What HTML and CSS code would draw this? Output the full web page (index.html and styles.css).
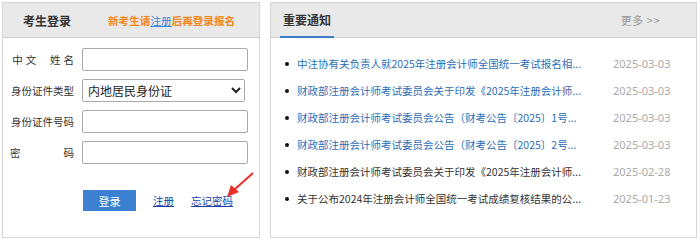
FILE: index.html
```html
<!DOCTYPE html>
<html>
<head>
    <meta charset="utf-8">
    <link rel="stylesheet" href="styles.css">
</head>
<body>
<div class="page">
    <div class="login-box">
        <div class="box-head">
            <span class="box-title">考生登录</span>
            <span class="tip">新考生请<a href="#" class="tip-link">注册</a>后再登录报名</span>
        </div>
        <form class="login-form">
            <div class="form-row">
                <label class="form-label spaced" for="cn-name">中文&nbsp;&nbsp;姓名</label>
                <input type="text" id="cn-name" class="form-input">
            </div>
            <div class="form-row">
                <label class="form-label" for="id-type">身份证件类型</label>
                <select id="id-type" class="form-select">
                    <option>内地居民身份证</option>
                    <option>港澳居民来往内地通行证</option>
                    <option>台湾居民来往大陆通行证</option>
                    <option>护照</option>
                </select>
            </div>
            <div class="form-row">
                <label class="form-label" for="id-no">身份证件号码</label>
                <input type="text" id="id-no" class="form-input">
            </div>
            <div class="form-row">
                <label class="form-label justify" for="pwd">密码</label>
                <input type="password" id="pwd" class="form-input">
            </div>
            <div class="form-actions">
                <button type="button" class="login-btn">登录</button>
                <a href="#" class="form-link">注册</a>
                <a href="#" class="form-link">忘记密码</a>
            </div>
        </form>
        <svg class="arrow" width="30" height="27" viewBox="0 0 30 27">
            <line x1="28" y1="1" x2="9" y2="18" stroke="#e8302a" stroke-width="2"/>
            <polygon points="2,25 6,13 14,20" fill="#e8302a"/>
        </svg>
    </div>

    <div class="notice-box">
        <div class="box-head notice-head">
            <span class="box-title notice-title">重要通知</span>
            <a href="#" class="more">更多 &gt;&gt;</a>
        </div>
        <ul class="notice-list">
            <li class="notice-item"><a href="#" class="notice-text blue">中注协有关负责人就2025年注册会计师全国统一考试报名相...</a><span class="notice-date">2025-03-03</span></li>
            <li class="notice-item"><a href="#" class="notice-text blue">财政部注册会计师考试委员会关于印发《2025年注册会计师...</a><span class="notice-date">2025-03-03</span></li>
            <li class="notice-item"><a href="#" class="notice-text blue">财政部注册会计师考试委员会公告（财考公告〔2025〕1号...</a><span class="notice-date">2025-03-03</span></li>
            <li class="notice-item"><a href="#" class="notice-text blue">财政部注册会计师考试委员会公告（财考公告〔2025〕2号...</a><span class="notice-date">2025-03-03</span></li>
            <li class="notice-item"><a href="#" class="notice-text">财政部注册会计师考试委员会关于印发《2025年注册会计师...</a><span class="notice-date">2025-02-28</span></li>
            <li class="notice-item"><a href="#" class="notice-text">关于公布2024年注册会计师全国统一考试成绩复核结果的公...</a><span class="notice-date">2025-01-23</span></li>
        </ul>
    </div>
</div>
</body>
</html>
```

FILE: styles.css
```css
*{
    margin: 0;
    padding: 0;
    box-sizing: border-box;
}
body {
    background: #fff;
    font-family: "Noto Sans CJK SC", "Noto Sans", sans-serif;
    color: #333;
}

.page {
    display: flex;
    gap: 10px;
    padding: 2px 3px 3px 2px;
    height: 241px;
}

.login-box, .notice-box {
    position: relative;
    border: 1px solid #d6d6d6;
    height: 236px;
}

.login-box {
    width: 258px;
}

.notice-box {
    flex: 1;
}

.box-head {
    display: flex;
    align-items: center;
    height: 35px;
    background: #e9e9e9;
    border-bottom: 1px solid #cfcfcf;
    padding-left: 20px;
}

.box-title {
    font-size: 12px;
    font-weight: bold;
    color: #333;
}

.tip {
    margin-left: 37px;
    font-size: 10.6px;
    font-weight: bold;
    color: #f0851a;
}

.tip-link {
    color: #3b86d8;
    font-weight: normal;
}

.login-form {
    padding: 10px 0 0 7px;
}

.form-row {
    display: flex;
    align-items: center;
    height: 23px;
    margin-bottom: 8px;
}

.form-label {
    display: block;
    width: 64px;
    font-size: 10.5px;
    text-align: right;
    margin-right: 8px;
    color: #333;
    white-space: nowrap;
}

.spaced {
    letter-spacing: 3px;
    margin-right: 5px;
    width: 67px;
}

.justify {
    text-align: justify;
    text-align-last: justify;
}

.form-input {
    width: 166px;
    height: 23px;
    border: 1px solid #a9a9a9;
    border-radius: 2px;
    outline: none;
    padding: 0 4px;
}

.form-select {
    width: 163px;
    height: 23px;
    border: 1px solid #a9a9a9;
    border-radius: 2px;
    font-family: "Noto Sans CJK SC", sans-serif;
    font-size: 12px;
    color: #222;
    padding: 0 1px;
    background: #fff;
    outline: none;
}

.form-actions {
    display: flex;
    align-items: center;
    margin-top: 26px;
    padding-left: 73px;
}

.login-btn {
    width: 53px;
    height: 21px;
    border: none;
    background: #3c80d2;
    color: #fff;
    font-family: "Noto Sans CJK SC", sans-serif;
    font-size: 11px;
}

.form-link {
    font-size: 10.5px;
    color: #1c3fa6;
    text-decoration: underline;
    margin-left: 17px;
}

.arrow {
    position: absolute;
    left: 222px;
    top: 169px;
}

.notice-head {
    justify-content: space-between;
    padding-left: 0;
    padding-right: 36px;
}

.notice-title {
    height: 35px;
    line-height: 34px;
    margin-left: 9px;
    padding: 0 3px;
    border-bottom: 2px solid #3d7cc9;
}

.more {
    font-size: 11px;
    letter-spacing: 0.5px;
    color: #999;
    text-decoration: none;
}

.notice-list {
    list-style: none;
    padding: 12px 0 0 14px;
}

.notice-item {
    display: flex;
    align-items: center;
    height: 27px;
    font-size: 10.5px;
}

.notice-item::before {
    content: "";
    width: 4px;
    height: 4px;
    border-radius: 50%;
    background: #111;
    margin-right: 8px;
}

.notice-text {
    width: 290px;
    white-space: nowrap;
    color: #333;
    text-decoration: none;
}

.blue {
    color: #2c6db6;
}

.notice-date {
    margin-left: 26px;
    font-family: "Noto Sans", sans-serif;
    font-size: 11px;
    color: #aaa;
}
```
